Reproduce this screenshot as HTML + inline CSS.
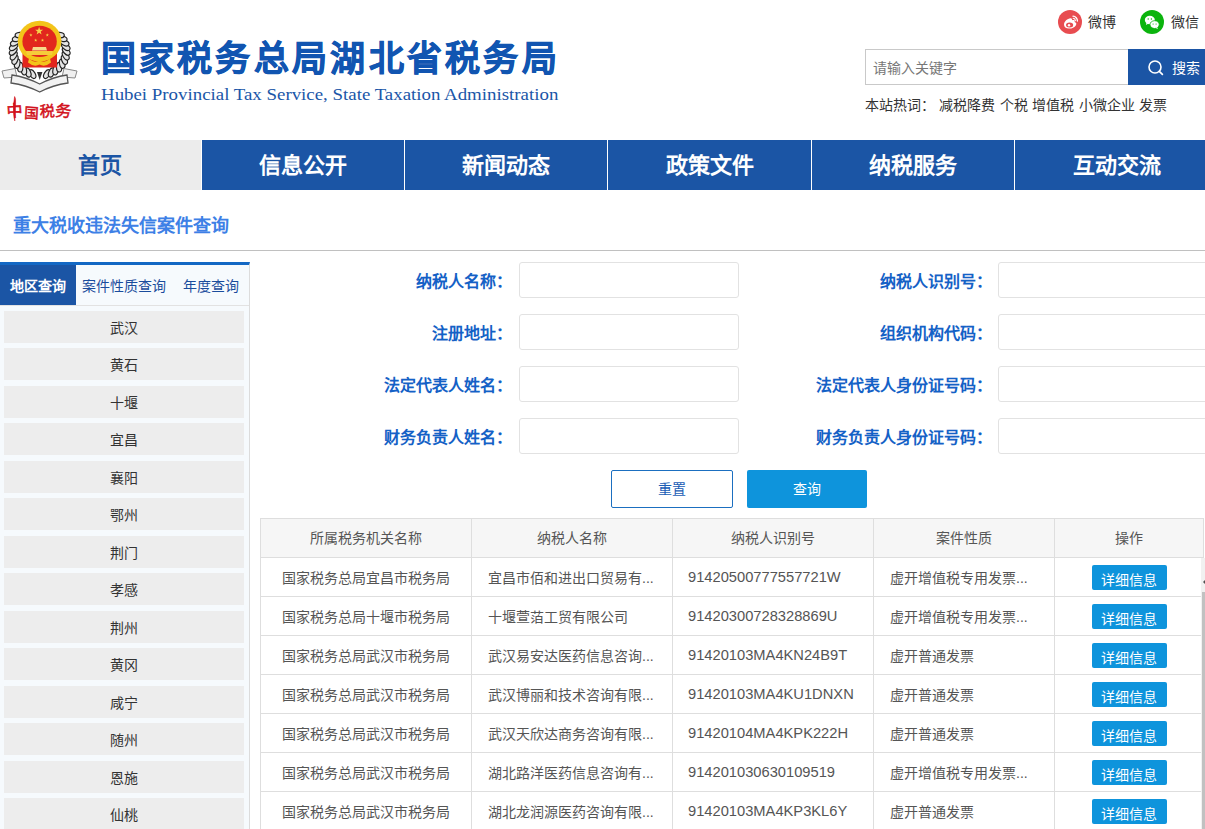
<!DOCTYPE html>
<html lang="zh-CN">
<head>
<meta charset="utf-8">
<style>
*{margin:0;padding:0;box-sizing:border-box}
html,body{width:1205px;height:829px;overflow:hidden;background:#fff}
body{position:relative;font-family:"Liberation Sans",sans-serif;color:#333;font-size:14px}
.abs{position:absolute}
/* header */
#title{left:100.5px;top:34px;font-size:35px;font-weight:bold;color:#1155b1;-webkit-text-stroke:0.7px #1155b1;white-space:nowrap;line-height:50px;letter-spacing:3.3px}
#sub{left:101px;top:84px;font-family:"Liberation Serif",serif;font-size:17px;transform:scaleX(1.11);transform-origin:0 0;color:#1a56a8;white-space:nowrap;line-height:22px}
.soc{top:9px;height:25px;line-height:25px;font-size:14px;color:#333;white-space:nowrap}
.soc i{position:absolute;left:0;top:1px;width:24px;height:24px;border-radius:50%}
#search{left:865px;top:49px;width:263px;height:36px;border:1px solid #c9c9c9;border-right:none}
#search span{position:absolute;left:7px;top:1px;line-height:34px;color:#777;font-size:14px}
#sbtn{left:1128px;top:49px;width:77px;height:36px;background:#1b55a5;color:#fff}
#hot{left:865px;top:95px;line-height:20px;font-size:14px;color:#333;white-space:nowrap;word-spacing:0.6px}
/* nav */
.nav{top:140px;height:50px;background:#1b55a5;color:#fff;font-size:22px;font-weight:bold;text-align:center;line-height:52px}
.nav.on{background:#ececec;color:#1b55a5}
/* section title */
#stitle{left:13px;top:212px;font-size:18px;font-weight:bold;color:#3d80e6;line-height:28px;white-space:nowrap}
#hr{left:0;top:250px;width:1205px;height:1px;background:#c0c0c0}
/* left panel */
#panel{left:0;top:262px;width:250px;height:600px;background:#f6fafd;border-top:3px solid #1368c4;border-right:1px solid #dcdcdc}
#tabs{position:absolute;left:0;top:0;width:249px;height:41px;border-bottom:1px solid #e2e2e2}
.tab{position:absolute;top:0;height:40px;line-height:42px;font-size:14px;color:#1a4c9c;white-space:nowrap}
.tab.on{background:#1b55a5;color:#fff;font-weight:bold}
.area{position:absolute;left:4px;width:240px;height:32px;background:#ededed;text-align:center;line-height:34px;font-size:14px;color:#333}
/* form */
.lbl{position:absolute;font-size:16px;font-weight:bold;color:#1461c6;text-align:right;line-height:40px;white-space:nowrap}
.inp{position:absolute;height:36px;border:1px solid #e2e2e2;border-radius:3px;background:#fff}
#reset{left:611px;top:470px;width:122px;height:38px;border:1px solid #1b6fc0;border-radius:2px;color:#1a5db5;text-align:center;line-height:37px;font-size:14px}
#query{left:747px;top:470px;width:120px;height:38px;background:#0e94dc;border-radius:2px;color:#fff;text-align:center;line-height:39px;font-size:14px}
/* table */
#tbl{position:absolute;left:260px;top:518px;border-collapse:collapse;table-layout:fixed;font-size:14px;color:#555}
#tbl td,#tbl th{border:1px solid #dedede;height:39px;padding:0;white-space:nowrap;overflow:hidden}
#tbl th{background:#f6f6f6;font-weight:normal;color:#555;text-align:center;padding-bottom:2px}
#tbl td{text-align:left;padding-left:16px}
#tbl td.c{text-align:center;padding-left:0}
#tbl td.n{font-size:14.7px;padding-left:15px}
#sb{left:1201px;top:558px;width:4px;height:271px;background:#f1f1f1}
#thumb{left:1202px;top:592px;width:3px;height:237px;background:#c1c1c1}
#arr{left:1203px;top:579px;width:0;height:0;border-top:3px solid transparent;border-bottom:3px solid transparent;border-right:3px solid #505050}
.btn{display:inline-block;width:75px;height:25px;line-height:25px;padding-top:3px;background:#0e94dc;color:#fff;border-radius:2px;text-align:center}
</style>
</head>
<body>
<!-- logo -->
<svg class="abs" style="left:0;top:0" width="80" height="125" viewBox="0 0 80 125">
<ellipse cx="47.0" cy="74.1" rx="4.8" ry="2.7" transform="rotate(122 47.0 74.1)" fill="#e4e4e4" stroke="#222" stroke-width="1.15"/><ellipse cx="51.5" cy="72.5" rx="4.8" ry="2.7" transform="rotate(112 51.5 72.5)" fill="#e4e4e4" stroke="#222" stroke-width="1.15"/><ellipse cx="55.6" cy="70.2" rx="4.8" ry="2.7" transform="rotate(101 55.6 70.2)" fill="#e4e4e4" stroke="#222" stroke-width="1.15"/><ellipse cx="59.2" cy="67.2" rx="4.8" ry="2.7" transform="rotate(90 59.2 67.2)" fill="#e4e4e4" stroke="#222" stroke-width="1.15"/><ellipse cx="62.2" cy="63.7" rx="4.8" ry="2.7" transform="rotate(80 62.2 63.7)" fill="#e4e4e4" stroke="#222" stroke-width="1.15"/><ellipse cx="64.4" cy="59.8" rx="4.8" ry="2.7" transform="rotate(70 64.4 59.8)" fill="#e4e4e4" stroke="#222" stroke-width="1.15"/><ellipse cx="65.7" cy="55.6" rx="4.8" ry="2.7" transform="rotate(59 65.7 55.6)" fill="#e4e4e4" stroke="#222" stroke-width="1.15"/><ellipse cx="66.2" cy="51.2" rx="4.8" ry="2.7" transform="rotate(48 66.2 51.2)" fill="#e4e4e4" stroke="#222" stroke-width="1.15"/><ellipse cx="65.8" cy="46.8" rx="4.8" ry="2.7" transform="rotate(38 65.8 46.8)" fill="#e4e4e4" stroke="#222" stroke-width="1.15"/><ellipse cx="64.5" cy="42.6" rx="4.8" ry="2.7" transform="rotate(28 64.5 42.6)" fill="#e4e4e4" stroke="#222" stroke-width="1.15"/><ellipse cx="62.4" cy="38.6" rx="4.8" ry="2.7" transform="rotate(17 62.4 38.6)" fill="#e4e4e4" stroke="#222" stroke-width="1.15"/><ellipse cx="59.5" cy="35.1" rx="4.8" ry="2.7" transform="rotate(6 59.5 35.1)" fill="#e4e4e4" stroke="#222" stroke-width="1.15"/><ellipse cx="32.4" cy="74.1" rx="4.8" ry="2.7" transform="rotate(238 32.4 74.1)" fill="#e4e4e4" stroke="#222" stroke-width="1.15"/><ellipse cx="27.9" cy="72.5" rx="4.8" ry="2.7" transform="rotate(248 27.9 72.5)" fill="#e4e4e4" stroke="#222" stroke-width="1.15"/><ellipse cx="23.8" cy="70.2" rx="4.8" ry="2.7" transform="rotate(259 23.8 70.2)" fill="#e4e4e4" stroke="#222" stroke-width="1.15"/><ellipse cx="20.2" cy="67.2" rx="4.8" ry="2.7" transform="rotate(270 20.2 67.2)" fill="#e4e4e4" stroke="#222" stroke-width="1.15"/><ellipse cx="17.2" cy="63.7" rx="4.8" ry="2.7" transform="rotate(280 17.2 63.7)" fill="#e4e4e4" stroke="#222" stroke-width="1.15"/><ellipse cx="15.0" cy="59.8" rx="4.8" ry="2.7" transform="rotate(290 15.0 59.8)" fill="#e4e4e4" stroke="#222" stroke-width="1.15"/><ellipse cx="13.7" cy="55.6" rx="4.8" ry="2.7" transform="rotate(301 13.7 55.6)" fill="#e4e4e4" stroke="#222" stroke-width="1.15"/><ellipse cx="13.2" cy="51.2" rx="4.8" ry="2.7" transform="rotate(312 13.2 51.2)" fill="#e4e4e4" stroke="#222" stroke-width="1.15"/><ellipse cx="13.6" cy="46.8" rx="4.8" ry="2.7" transform="rotate(322 13.6 46.8)" fill="#e4e4e4" stroke="#222" stroke-width="1.15"/><ellipse cx="14.9" cy="42.6" rx="4.8" ry="2.7" transform="rotate(332 14.9 42.6)" fill="#e4e4e4" stroke="#222" stroke-width="1.15"/><ellipse cx="17.0" cy="38.6" rx="4.8" ry="2.7" transform="rotate(343 17.0 38.6)" fill="#e4e4e4" stroke="#222" stroke-width="1.15"/><ellipse cx="19.9" cy="35.1" rx="4.8" ry="2.7" transform="rotate(354 19.9 35.1)" fill="#e4e4e4" stroke="#222" stroke-width="1.15"/>
<path d="M37 72 L39.7 80 L42.4 72Z" fill="#333"/>
<path d="M22.5 51 L22.5 67.5 L57 67.5 L57 51Z" fill="#e2261d"/>
<ellipse cx="39.6" cy="41.2" rx="21.8" ry="20.4" fill="#f3c41a"/>
<ellipse cx="39.6" cy="41.4" rx="17.2" ry="15.6" fill="#e2261d"/>
<polygon points="39.10,26.80 40.09,29.64 43.09,29.70 40.70,31.52 41.57,34.40 39.10,32.68 36.63,34.40 37.50,31.52 35.11,29.70 38.11,29.64" fill="#f6d34a"/><polygon points="30.90,33.30 31.30,34.45 32.52,34.47 31.55,35.21 31.90,36.38 30.90,35.68 29.90,36.38 30.25,35.21 29.28,34.47 30.50,34.45" fill="#f6d34a"/><polygon points="47.30,33.30 47.70,34.45 48.92,34.47 47.95,35.21 48.30,36.38 47.30,35.68 46.30,36.38 46.65,35.21 45.68,34.47 46.90,34.45" fill="#f6d34a"/><polygon points="35.70,38.50 36.10,39.65 37.32,39.67 36.35,40.41 36.70,41.58 35.70,40.88 34.70,41.58 35.05,40.41 34.08,39.67 35.30,39.65" fill="#f6d34a"/><polygon points="42.50,38.50 42.90,39.65 44.12,39.67 43.15,40.41 43.50,41.58 42.50,40.88 41.50,41.58 41.85,40.41 40.88,39.67 42.10,39.65" fill="#f6d34a"/>
<path d="M32 50.4 L33 47 L46 47 L47 50.4Z" fill="#f6d98a"/>
<path d="M26 51 L53 51 L52 55 L27 55Z" fill="#f6cc3a"/>
<path d="M29 58.5 Q34 63.5 39.5 60.5 Q45 63.5 50 58.5 L51 62.5 Q45 67.5 39.5 64.5 Q34 67.5 28 62.5Z" fill="#f3c41a"/>
<path d="M2 71 L15 68.5 L17 77 L4 78Z" fill="#f0f0f0" stroke="#8a8a8a" stroke-width="1"/>
<path d="M77 71 L64 68.5 L62 77 L75 78Z" fill="#f0f0f0" stroke="#8a8a8a" stroke-width="1"/>
<path d="M12 75 Q26 77 39.7 84 Q53 77 67 75 L68 83 Q53 85 39.7 92 Q26 85 11 83Z" fill="#f2f2f2" stroke="#555" stroke-width="1.3"/>
<g fill="#d2101a" font-family="Liberation Serif,serif" stroke="#d2101a" stroke-width="0.5">
<text x="6.5" y="116" font-size="16" transform="rotate(-4 16 110)">中</text>
<path d="M14.6 96.5 Q16 98 15.6 104 L14.8 121 Q13.2 116 13.6 104Z" fill="#d2101a"/>
<text x="24" y="118" font-size="14.5" transform="rotate(3 30 110)">国</text>
<text x="39.5" y="117" font-size="15" transform="rotate(-3 46 110)">税</text>
<text x="55" y="117" font-size="16" transform="rotate(4 62 110)">务</text>
</g>
</svg>
<div id="title" class="abs">国家税务总局湖北省税务局</div>
<div id="sub" class="abs">Hubei Provincial Tax Service, State Taxation Administration</div>

<div class="soc abs" style="left:1058px;width:60px"><i style="background:#e84c50"></i><svg class="abs" style="left:0;top:1px" width="24" height="24" viewBox="0 0 24 24"><path d="M6 14.5 C6 11.5 9.5 8.5 12.5 8.3 C14 8.2 14.3 9.3 14 10.2 C15.8 9.6 17.3 10.2 16.6 11.9 C18 12.3 18.6 13.1 18.2 14.4 C17.4 17 14.2 18.6 11 18.6 C8 18.6 6 17 6 14.5Z" fill="#fff"/><ellipse cx="11.6" cy="15" rx="3.6" ry="2.5" fill="#e84c50"/><circle cx="11" cy="15.2" r="1.2" fill="#fff"/><path d="M15 6.2 A4.6 4.6 0 0 1 19.4 11" fill="none" stroke="#fff" stroke-width="1.3" stroke-linecap="round"/><path d="M15.2 8.3 A2.5 2.5 0 0 1 17.4 10.6" fill="none" stroke="#fff" stroke-width="1.1" stroke-linecap="round"/></svg><span style="position:absolute;left:30px;top:1px">微博</span></div>
<div class="soc abs" style="left:1140px;width:65px"><i style="background:#0bb40d"></i><svg class="abs" style="left:0;top:1px" width="24" height="24" viewBox="0 0 24 24"><ellipse cx="9.8" cy="10" rx="5" ry="4.2" fill="#fff"/><path d="M6.5 12.5 L6 15 L8.5 13.5Z" fill="#fff"/><ellipse cx="14.6" cy="14.6" rx="4.6" ry="3.9" fill="#fff" stroke="#0bb40d" stroke-width="0.8"/><path d="M17 17 L18 19 L15.6 18Z" fill="#fff"/><circle cx="8.2" cy="9" r="0.7" fill="#0bb40d"/><circle cx="11.4" cy="9" r="0.7" fill="#0bb40d"/><circle cx="13.1" cy="14" r="0.6" fill="#0bb40d"/><circle cx="16.1" cy="14" r="0.6" fill="#0bb40d"/></svg><span style="position:absolute;left:31px;top:1px">微信</span></div>

<div id="search" class="abs"><span>请输入关键字</span></div>
<div id="sbtn" class="abs">
  <svg class="abs" style="left:19px;top:10px" width="18" height="18" viewBox="0 0 18 18"><circle cx="8" cy="8" r="6" fill="none" stroke="#fff" stroke-width="1.6"/><path d="M12.3 12.3 L15.4 15.4" stroke="#fff" stroke-width="1.7" stroke-linecap="round"/></svg>
  <span class="abs" style="left:44px;top:1px;line-height:36px;font-size:14px">搜索</span>
</div>
<div id="hot" class="abs">本站热词：&nbsp;减税降费 个税 增值税 小微企业 发票</div>

<div class="nav abs on" style="left:-2px;width:203px">首页</div>
<div class="nav abs" style="left:202px;width:202px">信息公开</div>
<div class="nav abs" style="left:405px;width:202px">新闻动态</div>
<div class="nav abs" style="left:608px;width:203px">政策文件</div>
<div class="nav abs" style="left:812px;width:202px">纳税服务</div>
<div class="nav abs" style="left:1015px;width:203px">互动交流</div>

<div id="stitle" class="abs">重大税收违法失信案件查询</div>
<div id="hr" class="abs"></div>

<div id="panel" class="abs">
  <div id="tabs">
    <div class="tab on" style="left:0;width:76px;text-align:center">地区查询</div>
    <div class="tab" style="left:82px">案件性质查询</div>
    <div class="tab" style="left:183px">年度查询</div>
  </div>
</div>
<div class="area abs" style="top:311px">武汉</div>
<div class="area abs" style="top:348px">黄石</div>
<div class="area abs" style="top:386px">十堰</div>
<div class="area abs" style="top:423px">宜昌</div>
<div class="area abs" style="top:461px">襄阳</div>
<div class="area abs" style="top:498px">鄂州</div>
<div class="area abs" style="top:536px">荆门</div>
<div class="area abs" style="top:573px">孝感</div>
<div class="area abs" style="top:611px">荆州</div>
<div class="area abs" style="top:648px">黄冈</div>
<div class="area abs" style="top:686px">咸宁</div>
<div class="area abs" style="top:723px">随州</div>
<div class="area abs" style="top:761px">恩施</div>
<div class="area abs" style="top:798px">仙桃</div>


<div class="lbl" style="left:300px;width:212px;top:262px">纳税人名称：</div>
<div class="lbl" style="left:300px;width:212px;top:314px">注册地址：</div>
<div class="lbl" style="left:300px;width:212px;top:366px">法定代表人姓名：</div>
<div class="lbl" style="left:300px;width:212px;top:418px">财务负责人姓名：</div>
<div class="inp" style="left:519px;top:262px;width:220px"></div>
<div class="inp" style="left:519px;top:314px;width:220px"></div>
<div class="inp" style="left:519px;top:366px;width:220px"></div>
<div class="inp" style="left:519px;top:418px;width:220px"></div>

<div class="lbl" style="left:760px;width:232px;top:262px">纳税人识别号：</div>
<div class="lbl" style="left:760px;width:232px;top:314px">组织机构代码：</div>
<div class="lbl" style="left:760px;width:232px;top:366px">法定代表人身份证号码：</div>
<div class="lbl" style="left:760px;width:232px;top:418px">财务负责人身份证号码：</div>
<div class="inp" style="left:998px;top:262px;width:220px"></div>
<div class="inp" style="left:998px;top:314px;width:220px"></div>
<div class="inp" style="left:998px;top:366px;width:220px"></div>
<div class="inp" style="left:998px;top:418px;width:220px"></div>

<div id="reset" class="abs">重置</div>
<div id="query" class="abs">查询</div>

<table id="tbl">
<colgroup><col style="width:211px"><col style="width:201px"><col style="width:201px"><col style="width:181px"><col style="width:149px"></colgroup>
<tr><th>所属税务机关名称</th><th>纳税人名称</th><th>纳税人识别号</th><th>案件性质</th><th>操作</th></tr>
<tr><td class="c">国家税务总局宜昌市税务局</td><td>宜昌市佰和进出口贸易有...</td><td class="n">91420500777557721W</td><td>虚开增值税专用发票...</td><td class="c"><span class="btn">详细信息</span></td></tr>
<tr><td class="c">国家税务总局十堰市税务局</td><td>十堰萱萡工贸有限公司</td><td class="n">91420300728328869U</td><td>虚开增值税专用发票...</td><td class="c"><span class="btn">详细信息</span></td></tr>
<tr><td class="c">国家税务总局武汉市税务局</td><td>武汉易安达医药信息咨询...</td><td class="n">91420103MA4KN24B9T</td><td>虚开普通发票</td><td class="c"><span class="btn">详细信息</span></td></tr>
<tr><td class="c">国家税务总局武汉市税务局</td><td>武汉博丽和技术咨询有限...</td><td class="n">91420103MA4KU1DNXN</td><td>虚开普通发票</td><td class="c"><span class="btn">详细信息</span></td></tr>
<tr><td class="c">国家税务总局武汉市税务局</td><td>武汉天欣达商务咨询有限...</td><td class="n">91420104MA4KPK222H</td><td>虚开普通发票</td><td class="c"><span class="btn">详细信息</span></td></tr>
<tr><td class="c">国家税务总局武汉市税务局</td><td>湖北路洋医药信息咨询有...</td><td class="n">914201030630109519</td><td>虚开增值税专用发票...</td><td class="c"><span class="btn">详细信息</span></td></tr>
<tr><td class="c">国家税务总局武汉市税务局</td><td>湖北龙润源医药咨询有限...</td><td class="n">91420103MA4KP3KL6Y</td><td>虚开普通发票</td><td class="c"><span class="btn">详细信息</span></td></tr>
</table>
<div id="sb" class="abs"></div><div id="thumb" class="abs"></div><div id="arr" class="abs"></div>
</body>
</html>
